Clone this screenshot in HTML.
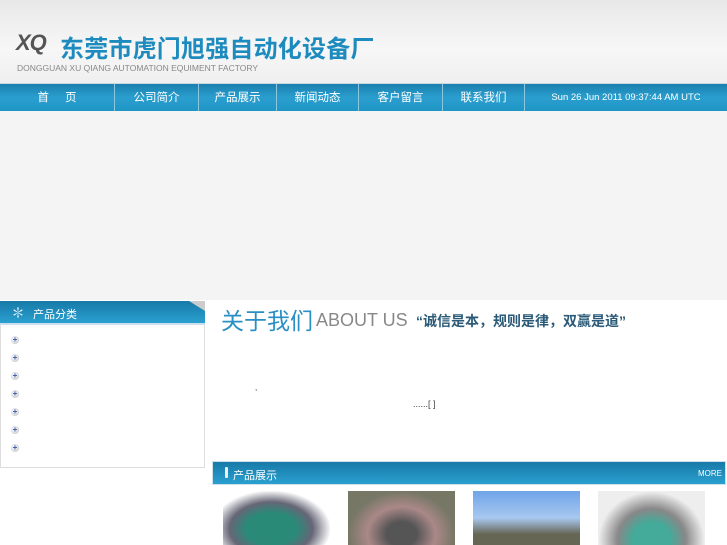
<!DOCTYPE html>
<html><head><meta charset="utf-8"><style>
*{margin:0;padding:0;box-sizing:border-box}
body{width:727px;height:545px;overflow:hidden;background:#fff;font-family:"Liberation Sans","Noto Sans CJK SC",sans-serif;position:relative}
.abs{position:absolute}
#hdr{left:0;top:0;width:727px;height:83px;background:linear-gradient(#e8e8e8,#f7f7f7 60%,#efefef)}
#nav{left:0;top:83px;width:727px;height:28px;background:linear-gradient(#1a7fae,#2a9fcf 50%,#1f95c6);border-top:1px solid #c8d8e0}
.ni{position:absolute;top:0;height:28px;line-height:28px;color:#fff;font-size:11.5px;text-align:center;border-left:1px solid #8cc6e0}
#band{left:0;top:111px;width:727px;height:189px;background:#f4f4f4}
.bullet{position:absolute;left:11px;width:8px;height:8px;border-radius:50%;background:radial-gradient(circle at 40% 40%,#fff,#bbb);color:#3355aa;font-size:8px;line-height:8px;text-align:center;font-weight:bold}
.img{position:absolute;top:491px;width:107px;height:54px}
</style></head><body>
<div id="hdr" class="abs"></div>
<div class="abs" style="left:16px;top:30px;font-size:22px;font-weight:bold;color:#555;font-style:italic;letter-spacing:-1px">XQ</div>
<div class="abs" style="left:60px;top:29px;font-size:24px;font-weight:bold;color:#1e8bbf;letter-spacing:0.2px">东莞市虎门旭强自动化设备厂</div>
<div class="abs" style="left:17px;top:63px;font-size:8.5px;color:#888">DONGGUAN XU QIANG AUTOMATION EQUIMENT FACTORY</div>
<div id="nav" class="abs">
<div class="ni" style="left:0;width:114px;border-left:none">首&nbsp;&nbsp;&nbsp;&nbsp;&nbsp;页</div>
<div class="ni" style="left:114px;width:84px">公司简介</div>
<div class="ni" style="left:198px;width:78px">产品展示</div>
<div class="ni" style="left:276px;width:82px">新闻动态</div>
<div class="ni" style="left:358px;width:84px">客户留言</div>
<div class="ni" style="left:442px;width:82px">联系我们</div>
<div class="ni" style="left:524px;width:203px;font-size:9.5px">Sun 26 Jun 2011 09:37:44 AM UTC</div>
</div>
<div id="band" class="abs"></div>
<div class="abs" style="left:0;top:301px;width:205px;height:167px;border:1px solid #ddd;background:#fff"></div>
<div class="abs" style="left:0;top:301px;width:205px;height:24px;background:linear-gradient(#177aa8,#2aa0d0);border-bottom:2px solid #cde"></div>
<div class="abs" style="left:189px;top:301px;width:0;height:0;border-top:10px solid #ccc;border-left:16px solid transparent"></div>
<div class="abs" style="left:11px;top:306px;color:#fff;font-size:14px;line-height:14px">✽</div>
<div class="abs" style="left:33px;top:306px;color:#fff;font-size:11px">产品分类</div>
<div class="bullet" style="top:336px">+</div><div class="bullet" style="top:354px">+</div><div class="bullet" style="top:372px">+</div><div class="bullet" style="top:390px">+</div><div class="bullet" style="top:408px">+</div><div class="bullet" style="top:426px">+</div><div class="bullet" style="top:444px">+</div>
<div class="abs" style="left:221px;top:302px;font-size:23px;color:#2a8fc4">关于我们</div>
<div class="abs" style="left:316px;top:310px;font-size:18px;color:#888">ABOUT US</div>
<div class="abs" style="left:416px;top:311px;font-size:14px;font-weight:bold;color:#2a5a78">“诚信是本，规则是律，双赢是道”</div>
<div class="abs" style="left:255px;top:383px;font-size:8px;color:#333">,</div>
<div class="abs" style="left:413px;top:399px;font-size:9px;color:#444">......[ ]</div>
<div class="abs" style="left:212px;top:461px;width:514px;height:24px;background:linear-gradient(#177aa8,#2aa0d0);border:1px solid #cfe0ea"></div>
<div class="abs" style="left:225px;top:467px;width:3px;height:11px;background:#eee;border-radius:1px"></div>
<div class="abs" style="left:233px;top:467px;color:#fff;font-size:11px">产品展示</div>
<div class="abs" style="left:698px;top:469px;color:#fff;font-size:8px">MORE</div>
<div class="img" style="left:223px;background:radial-gradient(ellipse at 45% 70%,#2a8a78 30%,#667 50%,#fff 72%)"></div>
<div class="img" style="left:348px;background:radial-gradient(ellipse at 50% 80%,#555 20%,#a88 45%,#776 70%)"></div>
<div class="img" style="left:473px;background:linear-gradient(#6fa4e8,#a8c8f0 50%,#665 80%)"></div>
<div class="img" style="left:598px;background:radial-gradient(ellipse at 50% 90%,#4a9 25%,#888 45%,#eee 70%)"></div>
</body></html>
